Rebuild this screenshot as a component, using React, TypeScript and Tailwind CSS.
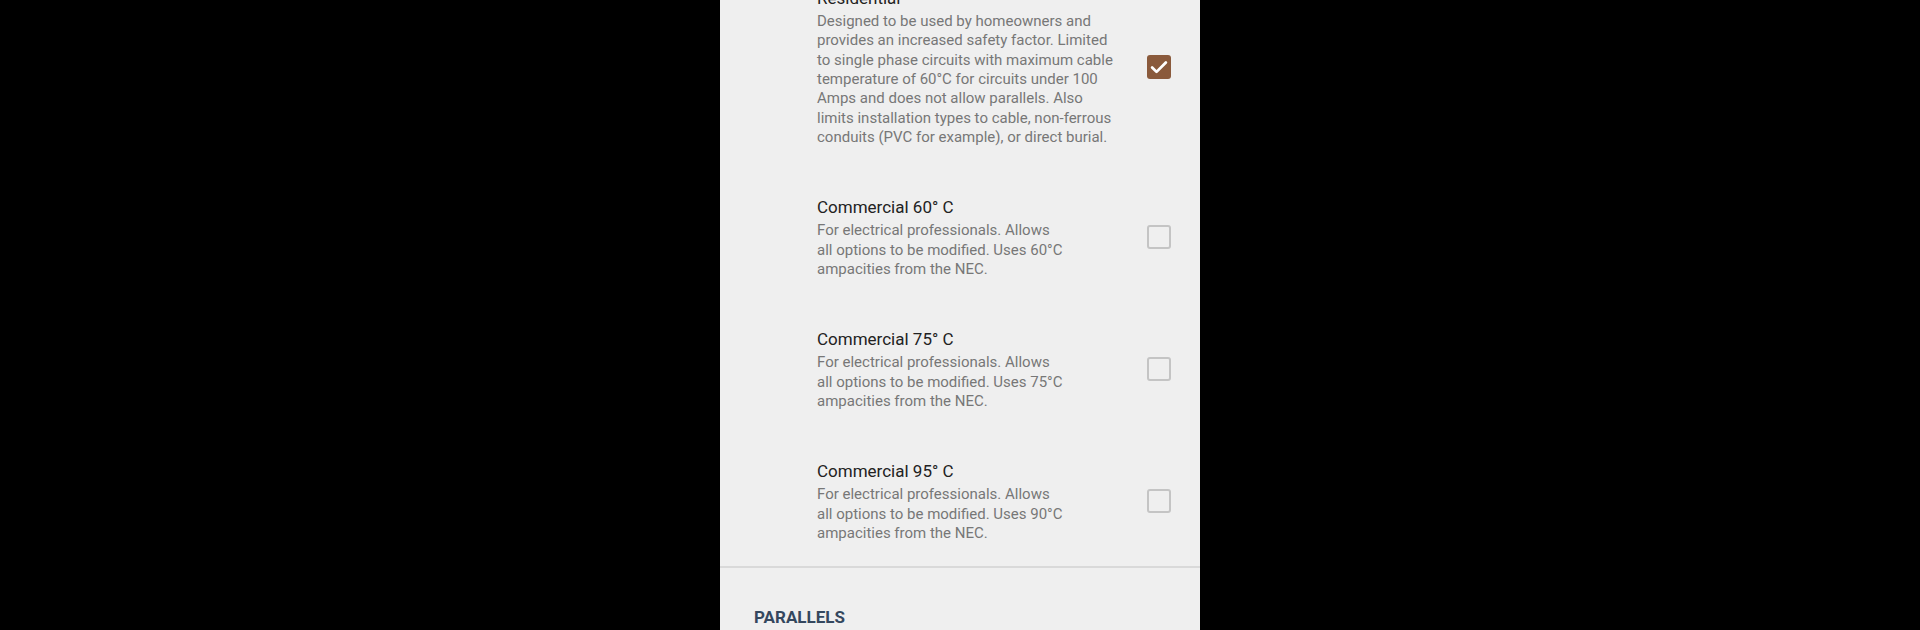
import React from 'react';

interface Option {
  id: string;
  title: string;
  description: string;
  checked: boolean;
  descWidth: string;
}

const options: Option[] = [
  {
    id: 'residential',
    title: 'Residential',
    description:
      'Designed to be used by homeowners and provides an increased safety factor. Limited to single phase circuits with maximum cable temperature of 60°C for circuits under 100 Amps and does not allow parallels. Also limits installation types to cable, non-ferrous conduits (PVC for example), or direct burial.',
    checked: true,
    descWidth: 'w-[302px]',
  },
  {
    id: 'c60',
    title: 'Commercial 60° C',
    description: 'For electrical professionals. Allows all options to be modified. Uses 60°C ampacities from the NEC.',
    checked: false,
    descWidth: 'w-[250px]',
  },
  {
    id: 'c75',
    title: 'Commercial 75° C',
    description: 'For electrical professionals. Allows all options to be modified. Uses 75°C ampacities from the NEC.',
    checked: false,
    descWidth: 'w-[250px]',
  },
  {
    id: 'c95',
    title: 'Commercial 95° C',
    description: 'For electrical professionals. Allows all options to be modified. Uses 90°C ampacities from the NEC.',
    checked: false,
    descWidth: 'w-[250px]',
  },
];

const CheckBox = ({ checked }: { checked: boolean }) =>
  checked ? (
    <div className="size-[24px] rounded-[3px] bg-[#8a5a3c] flex items-center justify-center">
      <svg viewBox="0 0 24 24" className="size-[22px]" fill="none" stroke="#ffffff" strokeWidth="3" strokeLinecap="round" strokeLinejoin="round">
        <path d="M4.5 12.5l4.8 4.8L19.5 7" />
      </svg>
    </div>
  ) : (
    <div className="size-[24px] rounded-[3px] border-[2.5px] border-[#c4c4c4]" />
  );

const App = () => {
  return (
    <div className="w-[1920px] h-[630px] bg-black flex justify-center overflow-hidden" style={{ fontFamily: 'Roboto, "Noto Sans", sans-serif' }}>
      <div className="w-[480px] h-full bg-[#efefef] flex flex-col">
        <div className="-mt-[38px]">
          {options.map((opt) => (
            <div key={opt.id} className="flex items-center pl-[97px] pr-[29px] py-[24px]">
              <div className="flex-1">
                <p className="text-[17px] leading-[24px] mb-[2px] text-[#222222]">{opt.title}</p>
                <p className={`text-[15px] leading-[19.35px] text-[#777777] ${opt.descWidth}`}>{opt.description}</p>
              </div>
              <CheckBox checked={opt.checked} />
            </div>
          ))}
        </div>
        <div className="h-[2px] bg-[#d9d9d9] -mt-[2px]" />
        <p className="pl-[34px] pt-[37px] text-[17px] leading-[24px] font-bold text-[#34475e]">PARALLELS</p>
      </div>
    </div>
  );
};

export default App;
